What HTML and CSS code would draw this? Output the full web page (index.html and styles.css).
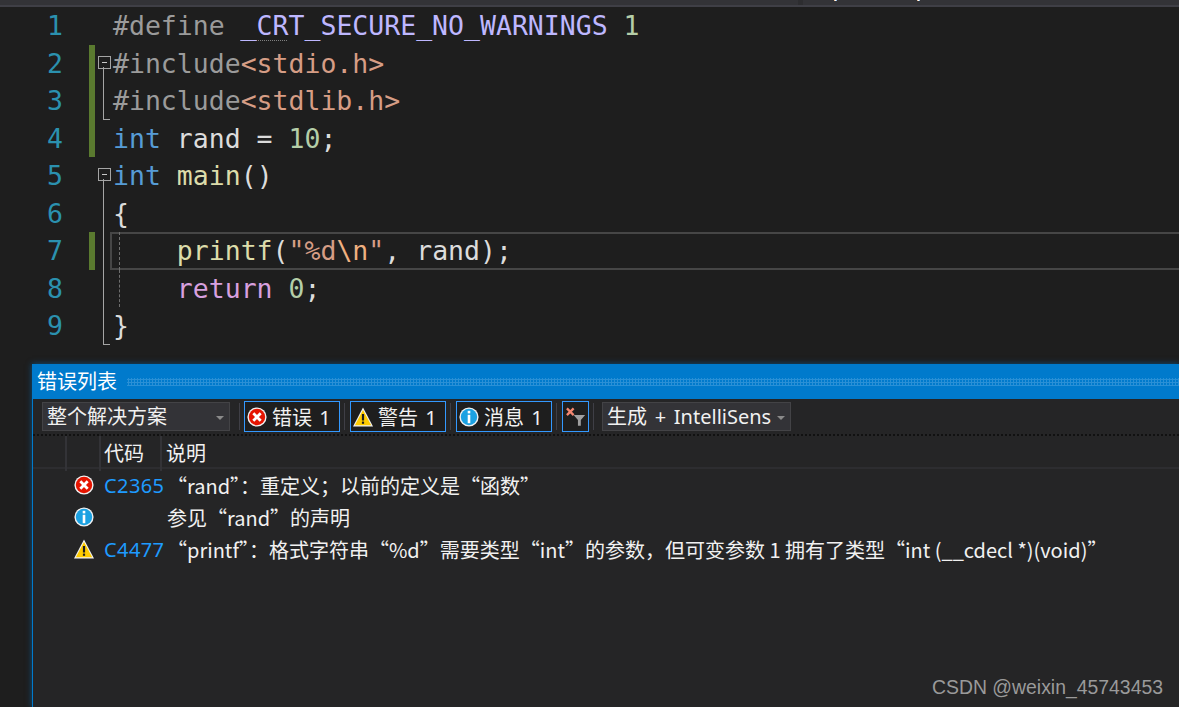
FILE: index.html
```html
<!DOCTYPE html>
<html lang="zh">
<head>
<meta charset="utf-8">
<title>错误列表</title>
<link rel="stylesheet" href="styles.css">
</head>
<body>
<svg class="defs" width="0" height="0" aria-hidden="true">
  <symbol id="i-err" viewBox="0 0 20 20">
    <circle cx="10" cy="10" r="9.6" fill="#f2f2f2"/>
    <circle cx="10" cy="10" r="8.2" fill="#e51400"/>
    <path d="M6.300 6.300l7.400 7.400M13.700 6.300l-7.400 7.400" stroke="#fff" stroke-width="2.800" fill="none"/>
  </symbol>
  <symbol id="i-warn" viewBox="0 0 20 20">
    <path d="M10 .5L20 19.500H0z" fill="#f2f2f2"/>
    <path d="M10 3L18.200 18.300H1.800z" fill="#ffcc00"/>
    <path d="M10 7v6.500" stroke="#1e1e1e" stroke-width="2.200" fill="none"/>
    <rect x="8.900" y="14.600" width="2.200" height="2.200" fill="#1e1e1e"/>
  </symbol>
  <symbol id="i-info" viewBox="0 0 20 20">
    <circle cx="10" cy="10" r="9.600" fill="#f2f2f2"/>
    <circle cx="10" cy="10" r="8.200" fill="#1ba1e2"/>
    <rect x="8.700" y="3.800" width="2.600" height="2.600" fill="#fff"/>
    <rect x="8.700" y="7.800" width="2.600" height="8.400" fill="#fff"/>
  </symbol>
</svg>

<header class="tabstrip">
  <div class="tab-left"></div>
  <div class="tab-gap"></div>
  <div class="tab-right"><span class="frag first"></span><span class="frag"></span></div>
</header>

<main class="editor">
  <div class="line"><span class="num">1</span><span class="chg"></span><span class="fold"></span><code class="code"><span class="pp">#define </span><span class="mac"><span class="dots">_CR</span>T_SECURE_NO_WARNINGS</span> <span class="lit">1</span></code></div>
  <div class="line"><span class="num">2</span><span class="chg on"></span><span class="fold open"></span><code class="code"><span class="pp">#include</span><span class="str">&lt;stdio.h&gt;</span></code></div>
  <div class="line"><span class="num">3</span><span class="chg on"></span><span class="fold end"></span><code class="code"><span class="pp">#include</span><span class="str">&lt;stdlib.h&gt;</span></code></div>
  <div class="line"><span class="num">4</span><span class="chg on"></span><span class="fold"></span><code class="code"><span class="kw">int</span> rand = <span class="lit">10</span>;</code></div>
  <div class="line"><span class="num">5</span><span class="chg"></span><span class="fold open"></span><code class="code"><span class="kw">int</span> <span class="fn">main</span>()</code></div>
  <div class="line"><span class="num">6</span><span class="chg"></span><span class="fold mid"></span><code class="code">{</code></div>
  <div class="line"><span class="num">7</span><span class="chg on"></span><span class="fold mid"></span><code class="code current guide">    <span class="fn">printf</span>(<span class="str">"%d</span><span class="esc">\n</span><span class="str">"</span>, rand);</code></div>
  <div class="line"><span class="num">8</span><span class="chg"></span><span class="fold mid"></span><code class="code guide">    <span class="ret">return</span> <span class="lit">0</span>;</code></div>
  <div class="line"><span class="num">9</span><span class="chg"></span><span class="fold end"></span><code class="code">}</code></div>
</main>

<section class="panel">
  <div class="titlebar"><span class="title">错误列表</span><span class="grip"></span></div>
  <div class="toolbar">
    <div class="combo scope"><span class="combo-text">整个解决方案</span><span class="caret"></span></div>
    <span class="sep"></span>
    <div class="toggle"><svg class="ic"><use href="#i-err"/></svg><span>错误 1</span></div>
    <span class="sep"></span>
    <div class="toggle"><svg class="ic"><use href="#i-warn"/></svg><span>警告 1</span></div>
    <span class="sep"></span>
    <div class="toggle"><svg class="ic"><use href="#i-info"/></svg><span>消息 1</span></div>
    <span class="sep"></span>
    <div class="toggle filter">
      <svg class="ic-filter" viewBox="0 0 24 22" width="24" height="22">
        <path d="M2 2l7 7M9 2L2 9" stroke="#f48771" stroke-width="2.400" fill="none"/>
        <path d="M9 9h12l-4.500 5v6h-3v-6z" fill="#a0a0a0"/>
      </svg>
    </div>
    <span class="sep"></span>
    <div class="combo source"><span class="combo-text clip">生成 + IntelliSens</span><span class="caret"></span></div>
  </div>
  <div class="table">
    <div class="thead">
      <span class="th"></span><span class="th"></span><span class="th">代码</span><span class="th">说明</span>
    </div>
    <div class="tr">
      <span class="td-icon"><svg class="ic"><use href="#i-err"/></svg></span>
      <a class="td-code">C2365</a>
      <span class="td-desc">“rand”：重定义；以前的定义是“函数”</span>
    </div>
    <div class="tr">
      <span class="td-icon"><svg class="ic"><use href="#i-info"/></svg></span>
      <a class="td-code"></a>
      <span class="td-desc">参见“rand”的声明</span>
    </div>
    <div class="tr">
      <span class="td-icon"><svg class="ic"><use href="#i-warn"/></svg></span>
      <a class="td-code">C4477</a>
      <span class="td-desc">“printf”：格式字符串“%d”需要类型“int”的参数，但可变参数 1 拥有了类型“int (__cdecl *)(void)”</span>
    </div>
  </div>
  <div class="watermark">CSDN @weixin_45743453</div>
</section>
</body>
</html>
```
FILE: styles.css
```css
* { box-sizing: border-box; }
html, body { margin: 0; height: 100%; }
body {
  width: 1179px; height: 707px; overflow: hidden;
  background: #1e1e1e;
  display: flex; flex-direction: column;
  font-family: "Noto Sans", "Noto Sans CJK SC", sans-serif;
  color: #f1f1f1;
}
.defs { position: absolute; }

.tabstrip { height: 7px; display: flex; flex: none; border-bottom: 2px solid #3f3f46; background: #333337; }
.tab-left { width: 798px; }
.tab-gap { width: 5px; background: #2d2d30; }
.tab-right { flex: 1; display: flex; align-items: flex-start; }
.frag { width: 3px; height: 1px; margin-left: 80px; background: linear-gradient(90deg, #e8a060, #fff, #5aa0e0); }
.frag.first { margin-left: 31px; }

.editor { flex: none; height: 357px; display: flex; flex-direction: column; }
.line { display: flex; height: 37.5px; flex: none; }
.num {
  width: 63px; flex: none; text-align: right;
  font: 26.5px/38.5px "DejaVu Sans Mono", monospace; color: #2b91af;
}
.chg { width: 6px; margin-left: 26px; flex: none; }
.chg.on { background: #5a7a2f; }
.fold { width: 18px; flex: none; position: relative; }
.fold.open::before {
  content: ""; position: absolute; left: 3px; top: 11px; width: 11px; height: 11px;
  border: 1px solid #a5a5a5; background: linear-gradient(#c8c8c8,#c8c8c8) center/5px 1px no-repeat #1e1e1e;
}
.fold.open::after {
  content: ""; position: absolute; left: 8px; top: 22px; bottom: 0; border-left: 1px solid #a5a5a5;
}
.fold.mid::before { content: ""; position: absolute; left: 8px; top: 0; bottom: 0; border-left: 1px solid #a5a5a5; }
.fold.end::before {
  content: ""; position: absolute; left: 8px; top: 0; bottom: 0; width: 6px;
  border-left: 1px solid #a5a5a5; border-bottom: 1px solid #a5a5a5;
}
.code {
  flex: 1; white-space: pre; position: relative;
  font: 26.5px/38.5px "DejaVu Sans Mono", monospace; color: #dcdcdc;
}
.current {
  margin-left: -3px; padding-left: 3px; height: 37.5px;
  box-shadow: inset 0 2px #464646, inset 0 -2px #464646, inset 2px 0 #464646;
}
.guide::before {
  content: ""; position: absolute; left: 6px; top: 0; bottom: 0;
  border-left: 1px dashed #6e6e6e;
}
.current.guide::before { left: 9px; }
.pp { color: #9b9b9b; }
.mac { color: #beb7ff; }
.dots { text-decoration: underline dotted #808080 1px; text-underline-offset: 5px; }
.lit { color: #b5cea8; }
.str { color: #d69d85; }
.esc { color: #efb080; }
.kw { color: #569cd6; }
.fn { color: #dcdcaa; }
.ret { color: #d8a0df; }

.panel {
  flex: 1; margin-left: 32px; display: flex; flex-direction: column; position: relative;
  background: #252526; border-left: 1px solid #007acc;
  box-shadow: 0 0 6px rgba(0, 122, 204, .55);
}
.titlebar {
  height: 35px; flex: none; background: #007acc; display: flex; align-items: center;
  padding-left: 4px; font-size: 20px; color: #fff;
}
.title { line-height: 35px; }
.grip {
  flex: 1; height: 8px; margin-left: 10px;
  background: radial-gradient(circle, #2a90d6 0 1px, transparent 1.2px) 0 0 / 3px 3px;
}
.toolbar {
  height: 37px; flex: none; display: flex; align-items: center; padding-left: 9px;
  border-bottom: 2px dotted #111;
  font-size: 20px; word-spacing: 2px;
}
.combo {
  height: 29px; display: flex; align-items: center; flex: none;
  background: #333337; border: 1px solid #434346; padding-left: 4px; color: #f1f1f1;
}
.scope { width: 188px; }
.source { width: 189px; margin-left: 3px; }
.combo-text { flex: 1; white-space: nowrap; overflow: hidden; line-height: 27px; }
.source .combo-text { word-spacing: 2.5px; }
.caret {
  flex: none; width: 0; height: 0; margin: 2px 5px 0 4px;
  border: 4px solid transparent; border-top-color: #8a8a8a; border-bottom: 0;
}
.sep { width: 1px; height: 27px; background: #3f3f46; margin: 0 5px 0 4px; flex: none; }
.toolbar > .scope + .sep { margin: 0 4px 0 9px; }
.toggle {
  width: 96px; height: 31px; flex: none; display: flex; align-items: center; gap: 5px;
  border: 1px solid #3399ff; padding-left: 2px; background: #1e1e1e; white-space: nowrap;
}
.filter { width: 27px; padding: 0 0 0 2px; }
.ic { width: 20px; height: 20px; flex: none; display: block; }
.ic-filter { display: block; }

.table { flex: 1; font-size: 20px; }
.thead {
  height: 33px; display: grid; grid-template-columns: 34px 34px 61px 1fr;
  border-bottom: 2px solid #2d2d30;
}
.th { border-right: 2px solid #333337; padding-left: 3px; line-height: 35px; color: #f1f1f1; }
.th:last-child { border-right: 0; padding-left: 4px; }
.tr { height: 32px; display: grid; grid-template-columns: 41px 30px 63px 1fr; grid-template-areas: ". i c d"; align-items: center; white-space: nowrap; }
.td-icon { grid-area: i; }
.td-code { grid-area: c; color: #1e9bff; letter-spacing: .4px; }
.td-desc { grid-area: d; overflow: hidden; color: #f1f1f1; font-family: "Noto Sans CJK SC", "Noto Sans", sans-serif; }
.watermark {
  position: absolute; right: 16px; bottom: 8px;
  font: 19.4px "Liberation Sans", sans-serif; color: #9a9a9a;
}
```
